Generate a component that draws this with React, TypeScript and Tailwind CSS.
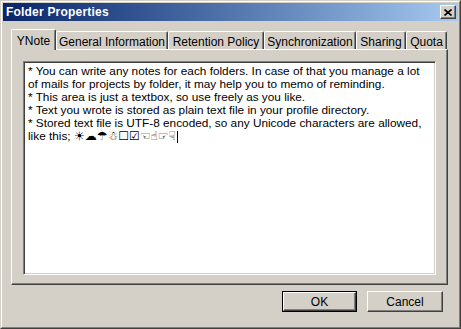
import React from "react";

const tabs = [
  { label: "General Information", w: "w-[112px]" },
  { label: "Retention Policy", w: "w-[96px]" },
  { label: "Synchronization", w: "w-[92px]" },
  { label: "Sharing", w: "w-[50px]" },
  { label: "Quota", w: "w-[41px]" },
];

const noteLines = [
  "* You can write any notes for each folders. In case of that you manage a lot",
  "of mails for projects by folder, it may help you to memo of reminding.",
  "* This area is just a textbox, so use freely as you like.",
  "* Text you wrote is stored as plain text file in your profile directory.",
  "* Stored text file is UTF-8 encoded, so any Unicode characters are allowed,",
];

function Button({ label, primary }: { label: string; primary?: boolean }) {
  return (
    <div
      className={
        primary
          ? "w-[75px] h-[21px] border border-black"
          : "w-[76px] h-[21px]"
      }
    >
      <div className="w-full h-full flex items-center justify-center border border-t-white border-l-white border-r-[#404040] border-b-[#404040] shadow-[inset_-1px_-1px_0_#808080] text-[12px] text-black">
        {label}
      </div>
    </div>
  );
}

export default function App() {
  return (
    <div className="w-[461px] h-[329px] bg-[#d4d0c8] border border-t-[#d4d0c8] border-l-[#d4d0c8] border-r-[#404040] border-b-[#404040] font-['Liberation_Sans',Arial,sans-serif] select-none">
      <div className="h-full border border-t-white border-l-white border-r-[#808080] border-b-[#808080] p-px flex flex-col">
        {/* Title bar */}
        <div className="h-[18px] flex items-center justify-between bg-gradient-to-r from-[#0a246a] to-[#a6caf0] pl-[3px] pr-[2px]">
          <span className="text-white font-bold text-[12px] tracking-[0.2px]">Folder Properties</span>
          <div className="w-[16px] h-[14px] flex items-center justify-center bg-[#d4d0c8] border border-t-white border-l-white border-r-[#404040] border-b-[#404040] shadow-[inset_-1px_-1px_0_#808080]">
            <svg width="8" height="7" viewBox="0 0 8 7">
              <path d="M0.5 0.5 L7.5 6.5 M7.5 0.5 L0.5 6.5" stroke="#000" strokeWidth="1.6" />
            </svg>
          </div>
        </div>

        {/* Tabs */}
        <div className="mt-[8px] ml-[8px] h-[20px] flex items-end text-[12px] text-black">
          <div className="relative z-10 w-[45px] h-[21px] -mb-px bg-[#d4d0c8] rounded-t-[2px] border border-b-0 border-t-white border-l-white border-r-[#404040] shadow-[inset_-1px_0_0_#808080] flex justify-center pt-[2px]">
            YNote
          </div>
          {tabs.map((t) => (
            <div
              key={t.label}
              className={`${t.w} h-[18px] rounded-t-[2px] border border-b-0 border-t-white border-l-white border-r-[#404040] shadow-[inset_-1px_0_0_#808080] flex justify-center pt-px`}
            >
              {t.label}
            </div>
          ))}
        </div>

        {/* Panel */}
        <div className="ml-[8px] w-[437px] h-[236px] border border-t-white border-l-white border-r-[#404040] border-b-[#404040] shadow-[inset_-1px_-1px_0_#808080] pl-[11px] pt-[11px]">
          <div className="w-[413px] h-[214px] bg-white border border-t-[#808080] border-l-[#808080] border-r-white border-b-white shadow-[inset_1px_1px_0_#404040,inset_-1px_-1px_0_#d4d0c8] pl-[4px] pt-[3px] text-[11.8px] leading-[13px] text-black whitespace-pre">
            {noteLines.map((l) => (
              <div key={l}>{l}</div>
            ))}
            <div className="flex items-center">
              <span>like this; </span>
              <span className="font-['DejaVu_Sans',sans-serif] text-[12px] leading-[13px]">☀☁☂☃☐☑☜☝☞☟</span>
              <span className="ml-px w-px h-[12px] bg-black" />
            </div>
          </div>
        </div>

        {/* Buttons */}
        <div className="mt-[6px] ml-[8px] w-[437px] flex justify-end gap-[10px] pr-[5px]">
          <Button label="OK" primary />
          <Button label="Cancel" />
        </div>
      </div>
    </div>
  );
}
